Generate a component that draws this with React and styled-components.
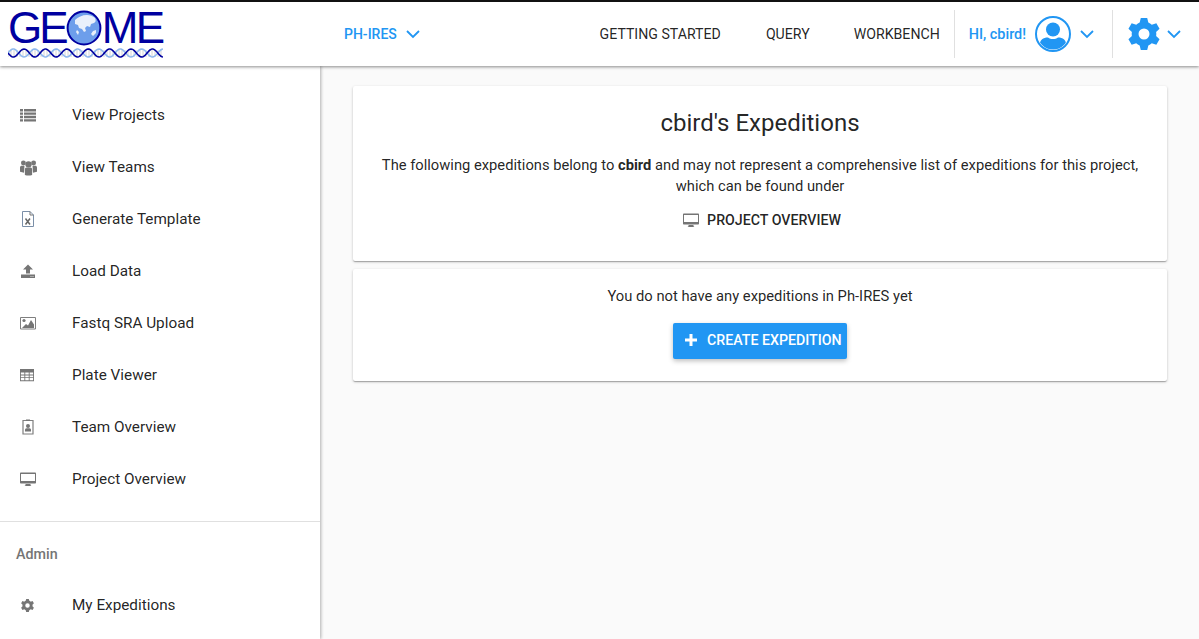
import React from "react";
import styled, { createGlobalStyle } from "styled-components";

const Global = createGlobalStyle`
  html, body { margin: 0; padding: 0; height: 100%; overflow: hidden; }
  body { font-family: Roboto, "Noto Sans", sans-serif; background: #fafafa; color: rgba(0,0,0,.87); }
  * { box-sizing: border-box; }
`;

const Page = styled.div`
  width: 1199px;
  height: 639px;
  display: flex;
  flex-direction: column;
  overflow: hidden;
`;
const Header = styled.header`
  height: 66px;
  flex: none;
  border-top: 2px solid #111;
  background: #fff;
  display: flex;
  align-items: center;
  box-shadow: 0 1px 3px rgba(0,0,0,.45);
  position: relative;
  z-index: 3;
`;
const Logo = styled.div`
  width: 155px;
  margin-left: 8px;
  flex: none;
  display: flex;
  flex-direction: column;
  gap: 3px;
  margin-top: 2px;
`;
const LogoWord = styled.div`
  height: 34px;
  display: flex;
  align-items: center;
  font: 44px/34px "Liberation Sans", Arial, sans-serif;
  color: #0000a0;
`;
const LogoLetter = styled.span`
  width: ${p => p.$w}px;
  flex: none;
  display: flex;
  justify-content: center;
`;
const ProjectPicker = styled.div`
  margin-left: 181px;
  display: flex;
  align-items: center;
  gap: 9px;
  color: #2196f3;
  font-size: 14px;
  font-weight: 500;
`;
const Spacer = styled.div`flex: 1;`;
const NavLink = styled.div`
  font-size: 14.15px;
  font-weight: 400;
  color: rgba(0,0,0,.87);
  margin-left: ${p => p.$ml}px;
  white-space: nowrap;
`;
const HeaderDivider = styled.div`
  width: 1px;
  height: 48px;
  background: #e0e0e0;
  flex: none;
  margin-left: ${p => p.$ml}px;
`;
const Greeting = styled.div`
  margin-left: 14px;
  font-size: 14.4px;
  font-weight: 500;
  color: #2196f3;
  white-space: nowrap;
`;
const IconSlot = styled.span`
  display: flex;
  flex: none;
  margin-left: ${p => p.$ml || 0}px;
`;
const Body = styled.div`
  flex: 1;
  display: flex;
  min-height: 0;
`;
const Sidebar = styled.aside`
  width: 320px;
  flex: none;
  background: #fff;
  box-shadow: 1px 0 3px rgba(0,0,0,.3);
  padding-top: 23px;
  position: relative;
  z-index: 2;
`;
const NavRow = styled.div`
  height: 52px;
  display: flex;
  align-items: center;
  font-size: 15.3px;
  color: rgba(0,0,0,.87);
`;
const NavIcon = styled.span`
  width: 72px;
  padding-left: 20px;
  flex: none;
  display: flex;
  color: #757575;
`;
const SideDivider = styled.div`
  height: 1px;
  background: #e0e0e0;
  margin-top: 16px;
`;
const SideHeading = styled.div`
  height: 63px;
  padding-left: 16px;
  display: flex;
  align-items: center;
  font-size: 14.3px;
  font-weight: 500;
  color: #757575;
`;
const AdminRow = styled(NavRow)`
  margin-top: -6px;
`;
const Main = styled.main`
  flex: 1;
  padding: 20px 32px 0 33px;
  display: flex;
  flex-direction: column;
  gap: 8px;
  align-items: stretch;
`;
const Card = styled.section`
  height: ${p => p.$h}px;
  background: #fff;
  border-radius: 2px;
  box-shadow: 0 1px 3px rgba(0,0,0,.2), 0 1px 1px rgba(0,0,0,.14), 0 2px 1px -1px rgba(0,0,0,.12);
  display: flex;
  flex-direction: column;
  align-items: center;
  text-align: center;
`;
const Title = styled.h1`
  margin: 22px 0 0;
  font-size: 24px;
  line-height: 30px;
  font-weight: 400;
  color: rgba(0,0,0,.87);
`;
const Lead = styled.p`
  margin: 17px 0 0;
  font-size: 14.72px;
  line-height: 21px;
  width: 790px;
  color: rgba(0,0,0,.87);
`;
const OverviewLink = styled.div`
  margin-top: 13px;
  padding-left: 4px;
  display: flex;
  align-items: center;
  gap: 8px;
  font-size: 14.2px;
  font-weight: 500;
  line-height: 20px;
  color: rgba(0,0,0,.87);
  & svg { color: #757575; }
`;
const EmptyText = styled.p`
  margin: 17px 0 0;
  font-size: 14.75px;
  line-height: 20px;
  color: rgba(0,0,0,.87);
`;
const PrimaryButton = styled.button`
  margin-top: 17px;
  width: 174px;
  height: 36px;
  border: 0;
  border-radius: 2px;
  background: #2196f3;
  color: #fff;
  font: 500 14.2px Roboto, sans-serif;
  display: flex;
  align-items: center;
  justify-content: flex-start;
  gap: 10px;
  padding: 0 0 2px 12px;
  white-space: nowrap;
  box-shadow: 0 2px 5px rgba(0,0,0,.26);
`;

const Chevron = () => (
  <svg width="14" height="14" viewBox="0 0 14 14" fill="none" stroke="#2196f3" strokeWidth="1.800">
    <path d="M1 4l6 6 6-6" />
  </svg>
);
const Glyph = ({ children, w = 16, h = 16 }) => (
  <svg width={w} height={h} viewBox="0 0 16 16" fill="currentColor">{children}</svg>
);
const ListIcon = () => (
  <Glyph><path d="M0 2h3v2.400H0zM4 2h12v2.400H4zM0 5.400h3v2.400H0zM4 5.400h12v2.400H4zM0 8.800h3v2.400H0zM4 8.800h12v2.400H4zM0 12.200h3v2.400H0zM4 12.200h12v2.400H4z" /></Glyph>
);
const TeamIcon = () => (
  <Glyph w={17} h={17}>
    <circle cx="3.200" cy="3.800" r="2.300" /><circle cx="12.800" cy="3.800" r="2.300" /><circle cx="8" cy="5" r="3" />
    <path d="M0 8c0-1 .8-1.600 1.700-1.600h2.500l-.4 6.600L1 12.300C.3 12.100 0 11.800 0 11.200zM16 8c0-1-.8-1.600-1.700-1.600h-2.500l.4 6.600 2.800-.7c.7-.2 1-.5 1-1.100zM4.600 9.200c.4-.9 1-1.200 1.800-1.200h3.200c.8 0 1.400.3 1.800 1.200v5.800c-2.200.8-4.600.8-6.800 0z" />
  </Glyph>
);
const ExcelIcon = () => (
  <Glyph>
    <path fill="none" stroke="#7b8fa8" strokeWidth="1" d="M2.500.5h7.500l3.500 3.500v11.500h-11z" />
    <path fill="none" stroke="#757575" d="M10 .5v3.500h3.500" />
    <path stroke="#666" strokeWidth="1.500" fill="none" d="M5.500 7.500l4.500 6M10 7.500l-4.500 6" />
  </Glyph>
);
const UploadIcon = () => (
  <Glyph><path d="M8 1.500l5 5h-3v4H6v-4H3zM1 11.500h14V15H1z" /><path fill="#fff" d="M10.500 13h1v.8h-1zM12.500 13h1v.8h-1z" /></Glyph>
);
const ImageIcon = () => (
  <Glyph>
    <path fill="#fff" stroke="#7f7f7f" d="M.5 2.500h15v11.500H.5z" />
    <circle cx="4" cy="5.500" r="1.600" />
    <path d="M2 13l4-4 2 1.500 3-5.500 3 4.500V13z" />
  </Glyph>
);
const TableIcon = () => (
  <Glyph w={14} h={14}>
    <path fillRule="evenodd" d="M0 1h16v14H0zM1 5v2.500h4V5zM6 5v2.500h4V5zM11 5v2.500h4V5zM1 8.500v2h4v-2zM6 8.500v2h4v-2zM11 8.500v2h4v-2zM1 11.500V14h4v-2.500zM6 11.500V14h4v-2.500zM11 11.500V14h4v-2.500z" />
  </Glyph>
);
const BadgeIcon = () => (
  <Glyph>
    <path fill="none" stroke="#7f7f7f" strokeWidth="1.200" d="M3 1.500h10v13.500H3z" />
    <path d="M6 .5h4v1.500H6z" />
    <circle cx="8" cy="7" r="2" />
    <path d="M5 12.500v-2c0-.8 1-1.300 3-1.300s3 .5 3 1.300v2z" />
  </Glyph>
);
const MonitorIcon = () => (
  <Glyph>
    <path d="M1 1.500h14c.6 0 1 .4 1 1v9c0 .6-.4 1-1 1H1c-.6 0-1-.4-1-1v-9c0-.6.4-1 1-1zM1 3v7h14V3zM5.500 13h5v1.200l1 .8h-7l1-.8z" fillRule="evenodd" />
    <path d="M1 10h14v2H1z" />
  </Glyph>
);
const GearPath = "M9.400 1h-2.800l-.5 2a5.500 5.500 0 0 0-1.500.9l-2-.6L1.200 5.700l1.500 1.400a5.500 5.500 0 0 0 0 1.800L1.200 10.300l1.400 2.400 2-.6a5.500 5.500 0 0 0 1.500.9l.5 2h2.800l.5-2a5.500 5.500 0 0 0 1.500-.9l2 .6 1.400-2.400-1.500-1.400a5.500 5.500 0 0 0 0-1.800l1.500-1.400-1.400-2.400-2 .6a5.500 5.500 0 0 0-1.500-.9zM8 5.600a2.400 2.400 0 1 1 0 4.800 2.400 2.400 0 0 1 0-4.800z";
const GearIcon = () => (
  <Glyph w={15} h={15}><path fillRule="evenodd" d={GearPath} /></Glyph>
);
const BigGear = () => (
  <svg width="32" height="32" viewBox="1 1 14 14" fill="#2196f3"><path fillRule="evenodd" d={GearPath} /></svg>
);
const Avatar = () => (
  <svg width="36" height="36" viewBox="0 0 36 36">
    <defs><clipPath id="avatarClip"><circle cx="18" cy="18" r="15.500" /></clipPath></defs>
    <circle cx="18" cy="18" r="17" fill="#fff" stroke="#2196f3" strokeWidth="2" />
    <g clipPath="url(#avatarClip)" fill="#2196f3">
      <circle cx="18" cy="13.500" r="7" />
      <path d="M5 36v-8c0-4 3-6.500 8-6.500 1.500 1 3 1.500 5 1.500s3.500-.5 5-1.500c5 0 8 2.500 8 6.500v8z" />
    </g>
  </svg>
);
const Plus = () => (
  <svg width="12" height="12" viewBox="0 0 12 12" fill="#fff"><path d="M4.500 0h3v4.500H12v3H7.500V12h-3V7.500H0v-3h4.500z" /></svg>
);
const Globe = () => (
  <svg width="36" height="36" viewBox="0 0 36 36" style={{ flex: "none" }}>
    <circle cx="18" cy="18" r="16.400" fill="#6d9eeb" stroke="#0000a0" strokeWidth="2" />
    <path fill="#e9f0fb" d="M9 10c3-3 7-5 12-5 3 0 6 1 8 3 1 2 1 4-1 5l-3 1-1 3-3-1-2 2 1 3-2 1-2-3-3-1-1-3-3-1z" />
    <path fill="#e9f0fb" d="M27 21l3-1 0 3-3 3-2-2zM11 20l2 2-1 3-2-3z" />
  </svg>
);
const strand = (phase) => {
  const pts = [];
  for (let x = 0; x <= 155; x += 1) {
    pts.push(`${x},${(5 + 4 * Math.sin((x / 21.4) * 2 * Math.PI + phase)).toFixed(2)}`);
  }
  return pts.join(" ");
};
const Helix = () => {
  const rungs = Array.from({ length: 52 }, (_, i) => i * 3);
  return (
    <svg width="155" height="11" viewBox="0 0 155 11" style={{ display: "block" }}>
      {rungs.map(x => <path key={x} d={`M${x} 2v7`} stroke="#d4d4d4" strokeWidth="1" />)}
      <polyline points={strand(Math.PI)} fill="none" stroke="#8fb8ee" strokeWidth="1.600" />
      <polyline points={strand(0)} fill="none" stroke="#0000a0" strokeWidth="1.600" />
    </svg>
  );
};

const items = [
  ["View Projects", ListIcon],
  ["View Teams", TeamIcon],
  ["Generate Template", ExcelIcon],
  ["Load Data", UploadIcon],
  ["Fastq SRA Upload", ImageIcon],
  ["Plate Viewer", TableIcon],
  ["Team Overview", BadgeIcon],
  ["Project Overview", MonitorIcon],
];

export default function App() {
  return (
    <Page>
      <Global />
      <Header>
        <Logo>
          <LogoWord>
            <LogoLetter $w={34}>G</LogoLetter>
            <LogoLetter $w={24}>E</LogoLetter>
            <LogoLetter $w={36}><Globe /></LogoLetter>
            <LogoLetter $w={36}>M</LogoLetter>
            <LogoLetter $w={25}>E</LogoLetter>
          </LogoWord>
          <Helix />
        </Logo>
        <ProjectPicker>PH-IRES <Chevron /></ProjectPicker>
        <Spacer />
        <NavLink $ml={0}>GETTING STARTED</NavLink>
        <NavLink $ml={45}>QUERY</NavLink>
        <NavLink $ml={44}>WORKBENCH</NavLink>
        <HeaderDivider $ml={14} />
        <Greeting>HI, cbird!</Greeting>
        <IconSlot $ml={9}><Avatar /></IconSlot>
        <IconSlot $ml={9}><Chevron /></IconSlot>
        <HeaderDivider $ml={18} />
        <IconSlot $ml={15}><BigGear /></IconSlot>
        <IconSlot $ml={7}><Chevron /></IconSlot>
        <IconSlot $ml={18} />
      </Header>
      <Body>
        <Sidebar>
          {items.map(([label, Icon]) => (
            <NavRow key={label}>
              <NavIcon><Icon /></NavIcon>
              {label}
            </NavRow>
          ))}
          <SideDivider />
          <SideHeading>Admin</SideHeading>
          <AdminRow>
            <NavIcon><GearIcon /></NavIcon>
            My Expeditions
          </AdminRow>
        </Sidebar>
        <Main>
          <Card $h={175}>
            <Title>cbird's Expeditions</Title>
            <Lead>
              The following expeditions belong to <b>cbird</b> and may not represent a comprehensive list of expeditions for this project, which can be found under
            </Lead>
            <OverviewLink><MonitorIcon /> PROJECT OVERVIEW</OverviewLink>
          </Card>
          <Card $h={112}>
            <EmptyText>You do not have any expeditions in Ph-IRES yet</EmptyText>
            <PrimaryButton><Plus /> CREATE EXPEDITION</PrimaryButton>
          </Card>
        </Main>
      </Body>
    </Page>
  );
}
